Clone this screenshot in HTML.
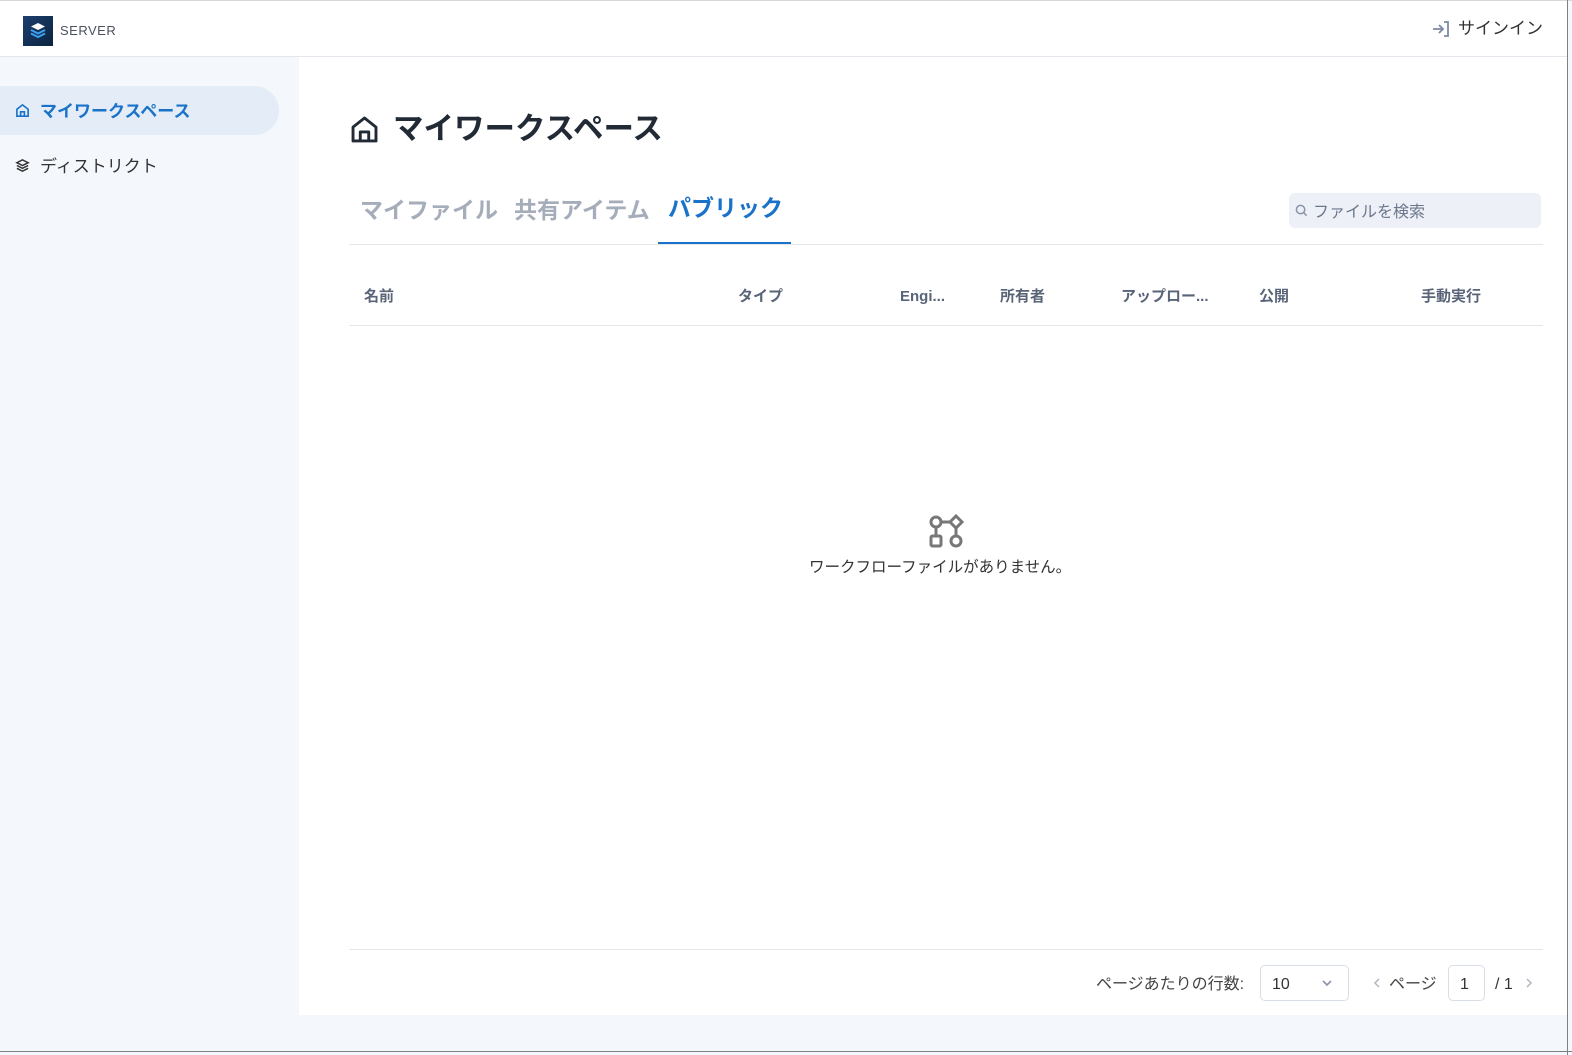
<!DOCTYPE html>
<html><head><meta charset="utf-8"><style>
*{box-sizing:border-box;margin:0;padding:0}
body{width:1572px;height:1055px;background:#f4f7fb;font-family:"Liberation Sans","Noto Sans CJK JP",sans-serif;position:relative;overflow:hidden;color:#2a2f3a}
.a{position:absolute;white-space:nowrap;line-height:1.45}
</style></head><body>
<div class="a" style="left:0;top:0;width:1572px;height:1px;background:#d8d8d8"></div>
<div class="a" style="left:0;top:1px;width:1567px;height:56px;background:#fff;border-bottom:1px solid #e3e6ec"></div>
<div class="a" style="left:23px;top:16px;width:30px;height:30px;background:linear-gradient(135deg,#1c3f6e,#0c2340)"></div>
<svg class="a" style="left:27px;top:20px" width="22" height="22" viewBox="0 0 22 22"><path d="M11 3l7 3.5-7 3.5-7-3.5z" fill="#fff"/><path d="M4 10l7 3.5 7-3.5M4 13.5l7 3.5 7-3.5" stroke="#3aa0f0" stroke-width="2" fill="none"/></svg>
<div class="a" style="left:60px;top:22px;font-size:13px;color:#4a5060;letter-spacing:.5px">SERVER</div>
<svg class="a" style="left:1431px;top:19px" width="20" height="20" viewBox="0 0 20 20" fill="none" stroke="#7d8aa3" stroke-width="1.8"><path d="M2 10h10M8 6l4 4-4 4M13 3h4v14h-4"/></svg>
<div class="a" style="left:1458px;top:17px;font-size:17px;color:#333">サインイン</div>
<div class="a" style="left:1567px;top:0;width:1px;height:1055px;background:#808080"></div>
<div class="a" style="left:0;top:1051px;width:1572px;height:1px;background:#808080"></div>

<div class="a" style="left:0;top:86px;width:279px;height:49px;background:#e3ecf7;border-radius:0 25px 25px 0"></div>
<svg class="a" style="left:15px;top:103px" width="15" height="15" viewBox="0 0 24 24" fill="none" stroke="#1a73c8" stroke-width="2.6"><path d="M3 10l9-7 9 7v11H3z M9 21v-7h6v7"/></svg>
<div class="a" style="left:40px;top:100px;font-size:17px;font-weight:bold;color:#1a73c8">マイワークスペース</div>
<svg class="a" style="left:15px;top:158px" width="15" height="15" viewBox="0 0 24 24" fill="none" stroke="#333" stroke-width="2.4"><path d="M12 3l9 4.5-9 4.5-9-4.5z M3 12l9 4.5 9-4.5 M3 16.5l9 4.5 9-4.5"/></svg>
<div class="a" style="left:40px;top:155px;font-size:17px;color:#333">ディストリクト</div>

<div class="a" style="left:299px;top:57px;width:1268px;height:958px;background:#fff"></div>
<svg class="a" style="left:350px;top:115px" width="29" height="29" viewBox="0 0 24 24" fill="none" stroke="#222a36" stroke-width="2.4" stroke-linejoin="round"><path d="M2.5 10L12 2.5 21.5 10v11.5h-19z M8.5 21.5V14h7v7.5"/></svg>
<div class="a" style="left:393px;top:107px;font-size:30.5px;font-weight:bold;color:#222a36">マイワークスペース</div>
<div class="a" style="left:360px;top:194px;font-size:23px;font-weight:bold;color:#a6adba">マイファイル</div>
<div class="a" style="left:514px;top:194px;font-size:23px;font-weight:bold;color:#a6adba">共有アイテム</div>
<div class="a" style="left:668px;top:192px;font-size:23px;font-weight:bold;color:#1a73c8">パブリック</div>
<div class="a" style="left:349px;top:244px;width:1194px;height:1px;background:#e4e6ea"></div>
<div class="a" style="left:658px;top:242px;width:133px;height:2px;background:#1a73c8"></div>
<div class="a" style="left:1289px;top:193px;width:252px;height:35px;background:#edf0f6;border-radius:6px"></div>
<svg class="a" style="left:1295px;top:204px" width="13" height="13" viewBox="0 0 14 14" fill="none" stroke="#8893a8" stroke-width="1.6"><circle cx="6" cy="6" r="4.5"/><path d="M9.5 9.5l3 3"/></svg>
<div class="a" style="left:1313px;top:201px;font-size:16px;color:#6c778c">ファイルを検索</div>

<div style="font-size:15px;font-weight:bold;color:#5a6478">
<div class="a" style="left:364px;top:286px">名前</div>
<div class="a" style="left:738px;top:286px">タイプ</div>
<div class="a" style="left:900px;top:286px">Engi...</div>
<div class="a" style="left:1000px;top:286px">所有者</div>
<div class="a" style="left:1121px;top:286px">アップロー...</div>
<div class="a" style="left:1259px;top:286px">公開</div>
<div class="a" style="left:1421px;top:286px">手動実行</div>
</div>
<div class="a" style="left:349px;top:325px;width:1194px;height:1px;background:#e4e6ea"></div>

<svg class="a" style="left:928px;top:514px" width="37" height="35" viewBox="0 0 37 35" fill="none" stroke="#777" stroke-width="3"><circle cx="8" cy="8" r="5"/><path d="M13 8h10"/><path d="M28 2l6 6-6 6-6-6z"/><path d="M8 13v9"/><rect x="3" y="22" width="10" height="10" rx="1.5"/><path d="M28 14v8"/><circle cx="28" cy="27" r="5"/></svg>
<div class="a" style="left:809px;top:557px;font-size:15.5px;color:#333">ワークフローファイルがありません。</div>

<div class="a" style="left:349px;top:949px;width:1194px;height:1px;background:#e4e6ea"></div>
<div class="a" style="left:1096px;top:973px;font-size:16px;color:#444">ページあたりの行数:</div>
<div class="a" style="left:1260px;top:965px;width:89px;height:36px;border:1px solid #d8dee8;border-radius:5px"></div>
<div class="a" style="left:1272px;top:973px;font-size:16px;color:#333">10</div>
<svg class="a" style="left:1321px;top:979px" width="12" height="8" viewBox="0 0 12 8" fill="none" stroke="#8893a8" stroke-width="1.6"><path d="M2 2l4 4 4-4"/></svg>
<svg class="a" style="left:1373px;top:977px" width="8" height="12" viewBox="0 0 8 12" fill="none" stroke="#b0b6c2" stroke-width="1.5"><path d="M6 2L2 6l4 4"/></svg>
<div class="a" style="left:1389px;top:973px;font-size:16px;color:#444">ページ</div>
<div class="a" style="left:1448px;top:965px;width:37px;height:36px;border:1px solid #d8dee8;border-radius:5px"></div>
<div class="a" style="left:1460px;top:973px;font-size:16px;color:#333">1</div>
<div class="a" style="left:1495px;top:973px;font-size:16px;color:#333">/ 1</div>
<svg class="a" style="left:1525px;top:977px" width="8" height="12" viewBox="0 0 8 12" fill="none" stroke="#b0b6c2" stroke-width="1.5"><path d="M2 2l4 4-4 4"/></svg>
</body></html>
